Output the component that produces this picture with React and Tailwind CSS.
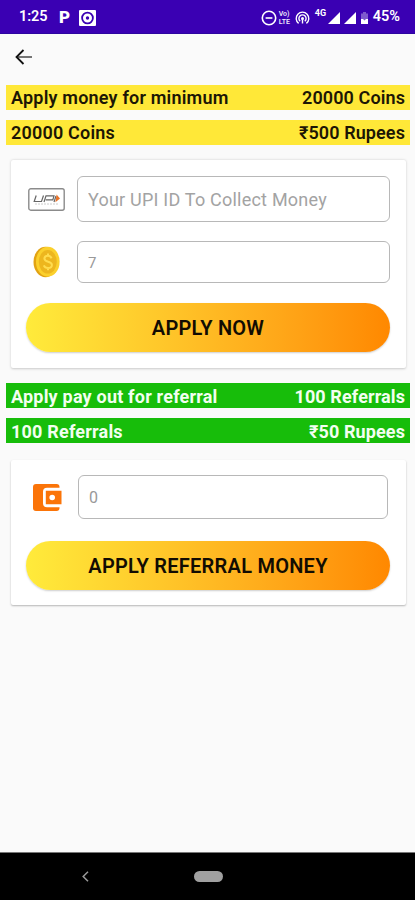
import React from "react";

function StatusBar() {
  return (
    <header className="flex h-[34px] shrink-0 items-center border-b border-[#2c05a0] bg-[#3a00b3] pl-[19px] pr-[15px] pt-[2px] text-white">
      <span className="w-[40px] text-[14.5px] font-semibold leading-none tracking-[-0.1px]">1:25</span>
      <span className="w-[13px] text-[17px] font-black leading-none">P</span>
      <svg className="ml-[7px] h-4 w-[17px]" viewBox="0 0 17 16" fill="none">
        <rect width="17" height="16" rx="1" fill="white" />
        <circle cx="8.5" cy="8" r="5.4" stroke="#3a00b3" strokeWidth="1.8" />
        <circle cx="8.5" cy="8" r="1.7" fill="#3a00b3" />
      </svg>
      <div className="ml-auto flex items-center">
        <svg className="h-4 w-4" viewBox="0 0 16 16" fill="none" stroke="white" strokeWidth="1.6">
          <circle cx="8" cy="8" r="6.7" />
          <path d="M4.6 8h6.8" />
        </svg>
        <div className="ml-[2px] flex w-[14px] flex-col text-[7px] font-semibold text-[#ece6fa]">
          <span className="h-[8px] leading-[8px]">Vo)</span>
          <span className="h-[8px] leading-[8px]">LTE</span>
        </div>
        <svg className="ml-[2px] h-[14px] w-[15px]" viewBox="0 0 15 14" fill="none" stroke="white" strokeWidth="1.4">
          <path d="M3.6 12.4a6.3 6.3 0 1 1 7.8 0" />
          <path d="M5.2 10.2a3.6 3.6 0 1 1 4.6 0" />
          <circle cx="7.5" cy="7.4" r="1.5" fill="white" stroke="none" />
          <path d="M7.5 8v4.5" />
        </svg>
        <span className="mb-2 ml-[5px] w-[13px] text-[9px] font-bold leading-none">4G</span>
        <svg className="h-[12px] w-[12px]" viewBox="0 0 12 12" fill="white">
          <path d="M12 0v12H0z" />
        </svg>
        <svg className="ml-[4px] h-[12px] w-[12px]" viewBox="0 0 12 12" fill="white">
          <path d="M12 0v12H0z" />
        </svg>
        <svg className="ml-[5px] h-[12px] w-[7px]" viewBox="0 0 7 12">
          <path d="M2 0h3v1.5h2V12H0V1.5h2z" fill="white" fillOpacity=".35" />
          <path d="M0 7h2l1.5 1.5L5 7h2v5H0z" fill="white" />
        </svg>
        <span className="ml-[5px] text-[14.5px] font-semibold leading-none">45%</span>
      </div>
    </header>
  );
}

function YellowRow({ left, right }) {
  return (
    <div className="ml-[6px] mr-[5px] flex h-[25px] items-center justify-between bg-[#ffe838] px-[5px] pt-px text-[18px] font-semibold leading-none text-[#1c1605]">
      <span className="tracking-[0.2px]">{left}</span>
      <span className="tracking-[0.1px]">{right}</span>
    </div>
  );
}

function GreenRow({ left, right }) {
  return (
    <div className="ml-[6px] mr-[5px] flex h-[25px] items-center justify-between bg-[#17bd0a] px-[5px] pt-[2px] text-[18px] font-bold leading-none text-[#f2fff0]">
      <span className="tracking-[0.2px]">{left}</span>
      <span className="tracking-[0.1px]">{right}</span>
    </div>
  );
}

function UpiIcon() {
  return (
    <svg className="h-[23px] w-[37px]" viewBox="0 0 37 23" fill="none">
      <rect x=".8" y=".8" width="35.4" height="21.4" rx="2" fill="white" stroke="#8b8b8b" strokeWidth="1.4" />
      <g stroke="#666" strokeWidth="1.2">
        <path d="M8.2 7.5 6.2 13.5h7.3l2-6" />
        <path d="m16 14 2-6.2h8l-1.2 4h-7" />
        <path d="m26 14 2-6" />
      </g>
      <path d="m28.6 6.5 3.4 4-4.6 3.8z" fill="#e8732a" />
      <path d="M7 16h24" stroke="#ccc" strokeDasharray="2 1" />
    </svg>
  );
}

function CoinIcon() {
  return (
    <svg className="h-8 w-[27px]" viewBox="0 0 27 32" fill="none">
      <ellipse cx="12.5" cy="16" rx="12" ry="15.2" fill="#e2a313" />
      <ellipse cx="14.8" cy="15.7" rx="11.8" ry="15" fill="#fbd02c" />
      <ellipse cx="14.8" cy="15.8" rx="9" ry="11.8" fill="#edb61e" />
      <path
        d="M18.6 12.2c-.8-1.7-2-2.5-3.6-2.5-2.2 0-3.6 1.2-3.6 2.8 0 4.2 7.5 2.2 7.5 6.4 0 1.9-1.6 3.1-3.9 3.1-2 0-3.5-1-4.2-2.7M15 7.4v2.4M15 21.8v2.4"
        stroke="#ffdc4e"
        strokeWidth="2"
      />
    </svg>
  );
}

function WalletIcon() {
  return (
    <svg className="h-[27px] w-[29px]" viewBox="0 0 29 27">
      <path d="M3 0h20.5a3 3 0 0 1 3 3v.8H14a4 4 0 0 0-4 4v11.4a4 4 0 0 0 4 4h12.5v.8a3 3 0 0 1-3 3H3a3 3 0 0 1-3-3V3a3 3 0 0 1 3-3z" fill="#fb7408" />
      <path d="M12.8 6.8h15.7v13.4H12.8zm6.4 3.9a2.8 2.8 0 1 0 0 5.6 2.8 2.8 0 0 0 0-5.6z" fill="#fb7408" fillRule="evenodd" />
    </svg>
  );
}

function GradientButton({ children }) {
  return (
    <button className="ml-[15px] mr-4 flex h-[49px] items-center justify-center rounded-full bg-linear-to-r from-[#ffeb3b] to-[#ff8800] pt-px text-[20px] font-semibold leading-none tracking-[0.25px] text-[#120c02] shadow-[0_1px_2px_rgba(0,0,0,0.2)]">
      {children}
    </button>
  );
}

export default function App() {
  return (
    <div className="flex h-[900px] w-[415px] flex-col bg-[#fafafa] font-[Roboto,sans-serif]">
      <StatusBar />

      <div className="flex h-[51px] shrink-0 items-start pl-[15px] pt-[15px]">
        <svg className="h-4 w-[17px]" viewBox="0 0 17 16" fill="none" strokeWidth="1.8">
          <path d="M2 8h15" stroke="#666" />
          <path d="M8.5 1 1.5 8l7 7" stroke="#111" />
        </svg>
      </div>

      <div className="flex flex-col gap-[10px]">
        <YellowRow left="Apply money for minimum" right="20000 Coins" />
        <YellowRow left="20000 Coins" right="₹500 Rupees" />
      </div>

      {/* Coins payout */}
      <section className="ml-[11px] mr-[9px] mt-[15px] flex h-[208px] flex-col rounded-[2px] bg-white pt-4 shadow-[0_0.5px_2.5px_rgba(0,0,0,0.2)]">
        <div className="flex items-center pl-[17px] pr-[16px]">
          <div className="w-[49px]">
            <UpiIcon />
          </div>
          <input
            className="h-[46px] min-w-0 flex-1 rounded-[6px] border border-[#b8b8b8] px-[10px] text-[18px] tracking-[0.22px] placeholder:text-[#a3a3a3]"
            placeholder="Your UPI ID To Collect Money"
          />
        </div>
        <div className="mt-[19px] flex items-center pl-[17px] pr-[16px]">
          <div className="w-[49px] pl-[5px]">
            <CoinIcon />
          </div>
          <div className="flex h-[42px] flex-1 items-center rounded-[6px] border border-[#b8b8b8] px-[10px] pt-[2px] text-[15px] text-[#999]">7</div>
        </div>
        <div className="mt-5 flex flex-col">
          <GradientButton>APPLY NOW</GradientButton>
        </div>
      </section>

      <div className="mt-[15px] flex flex-col gap-[10px]">
        <GreenRow left="Apply pay out for referral" right="100 Referrals" />
        <GreenRow left="100 Referrals" right="₹50 Rupees" />
      </div>

      {/* Referral payout */}
      <section className="ml-[11px] mr-[9px] mt-[17px] flex h-[145px] flex-col rounded-[2px] bg-white pt-[15px] shadow-[0_1px_2px_rgba(0,0,0,0.28)]">
        <div className="flex items-center pl-[22px] pr-[18px]">
          <div className="w-[45px]">
            <WalletIcon />
          </div>
          <div className="flex h-[44px] flex-1 items-center rounded-[6px] border border-[#b8b8b8] px-[10px] pt-[2px] text-[16px] text-[#999]">0</div>
        </div>
        <div className="mt-[22px] flex flex-col">
          <GradientButton>APPLY REFERRAL MONEY</GradientButton>
        </div>
      </section>

      <nav className="mt-auto flex h-12 shrink-0 items-center border-t border-[#777] bg-black pl-[82px]">
        <svg className="h-[11px] w-[7px]" viewBox="0 0 7 11" fill="none">
          <path d="M6 .8 1.2 5.5 6 10.2" stroke="#999" strokeWidth="1.5" />
        </svg>
        <span className="ml-[105px] h-[11px] w-[29px] rounded-full bg-[#a0a0a0]" />
      </nav>
    </div>
  );
}
